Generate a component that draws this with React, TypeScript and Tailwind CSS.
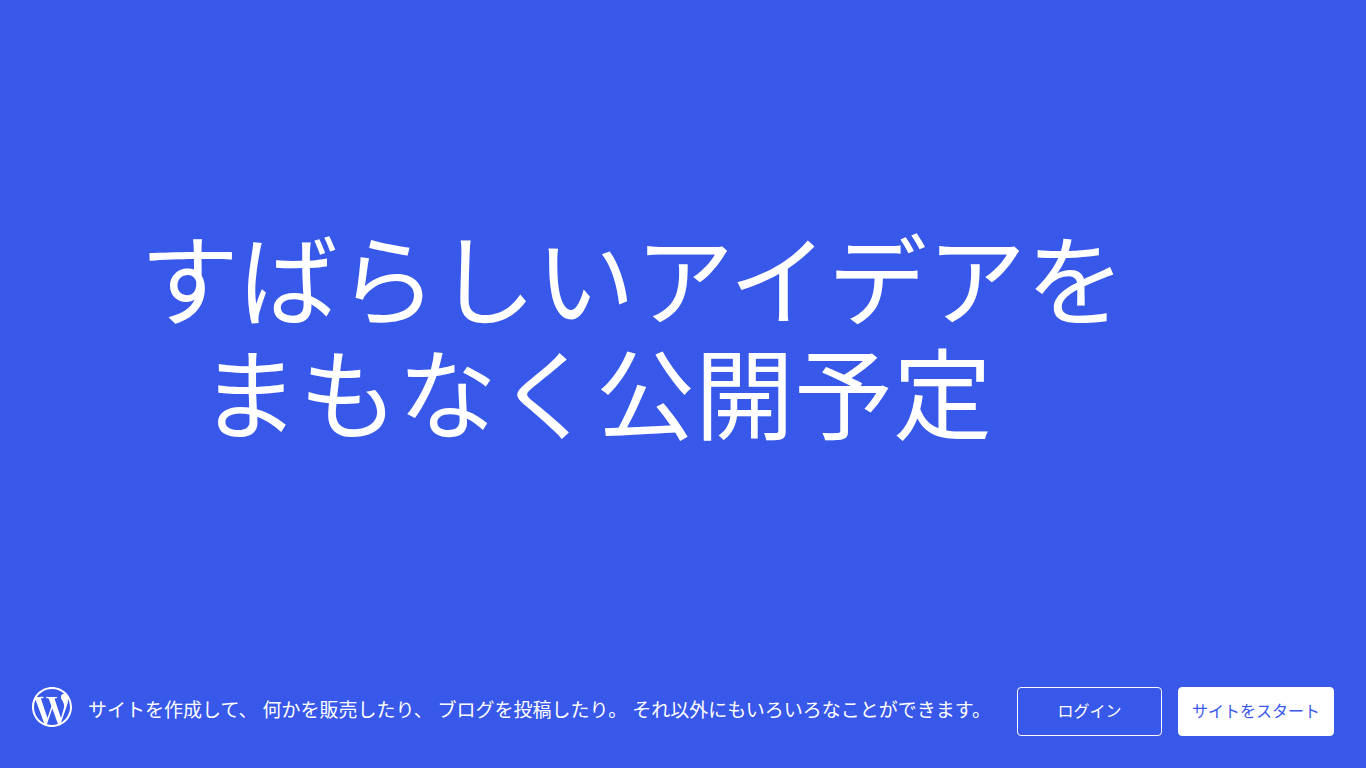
import { SiWordpress } from 'react-icons/si';

export default function ComingSoonPage() {
  return (
    <div className="flex min-h-screen flex-col bg-[#3858e9] font-['Noto_Sans','Noto_Sans_CJK_JP',sans-serif] text-white">
      <main className="flex flex-1 items-center px-[140px] pt-[18px]">
        <h1 className="text-[99px] leading-[114px] font-normal whitespace-nowrap">
          <span className="block">すばらしいアイデアを</span>
          <span className="block pl-15">まもなく公開予定</span>
        </h1>
      </main>

      <footer className="flex items-start p-8">
        <SiWordpress className="mr-4 size-10 shrink-0" aria-hidden="true" />
        <p className="flex-1 text-[19px] leading-[46px] whitespace-nowrap">
          サイトを作成して、 何かを販売したり、 ブログを投稿したり。 それ以外にもいろいろなことができます。
        </p>
        <div className="flex shrink-0 gap-4 text-center text-base leading-[23px]">
          <a href="#login" className="w-[145px] rounded border border-white py-3">
            ログイン
          </a>
          <a href="#start" className="rounded border border-white bg-white px-[13px] py-3 text-[#3858e9]">
            サイトをスタート
          </a>
        </div>
      </footer>
    </div>
  );
}
